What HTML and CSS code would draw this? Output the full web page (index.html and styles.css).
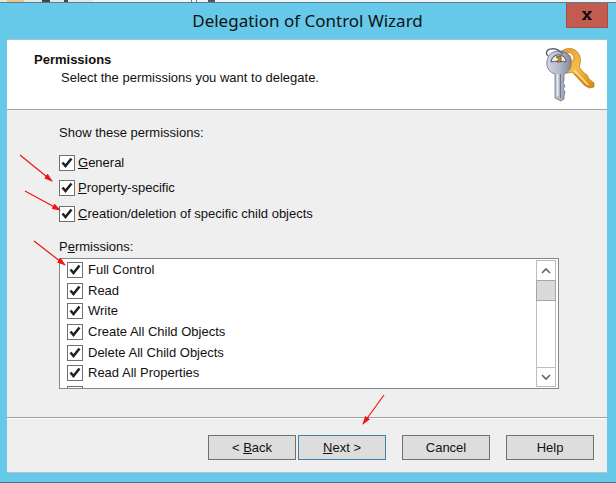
FILE: index.html
```html
<!DOCTYPE html>
<html lang="en">
<head>
<meta charset="UTF-8">
<meta name="viewport" content="width=device-width, initial-scale=1">
<title>Delegation of Control Wizard</title>
<link rel="stylesheet" href="styles.css">
</head>
<body>

<div class="behind">
	<svg width="300" height="2" viewBox="0 0 300 2">
		<path d="M0 0h93v2H0z" fill="#e6e6e6"/>
		<path d="M7 0h17v2H7z" fill="#e8c887"/>
		<path d="M42 1h8M64 1h4" stroke="#444" stroke-width="2"/>
		<path d="M191.500 0v2M196.500 0v2" stroke="#777"/>
		<path d="M208 1h7" stroke="#555" stroke-width="2"/>
	</svg>
</div>

<div class="window">
	<div class="titlebar">
		<h1>Delegation of Control Wizard</h1>
		<button type="button" class="close" aria-label="Close">
			<svg width="10" height="9" viewBox="0 0 10 9"><path d="M1.500 .5l7 8M8.500 .5l-7 8" stroke="#111" stroke-width="2.200"/><path d="M0 .5h4M6 .5h4M0 8.500h4M6 8.500h4" stroke="#111"/></svg>
		</button>
	</div>

	<form class="client">
		<div class="header">
			<div>
				<h2>Permissions</h2>
				<p>Select the permissions you want to delegate.</p>
			</div>
			<svg class="keys" width="52" height="56" viewBox="0 0 52 56">
				<defs>
					<linearGradient id="silver" x1="0" x2="1">
						<stop offset="0" stop-color="#d5d9e4"/>
						<stop offset=".5" stop-color="#b4b9c9"/>
						<stop offset="1" stop-color="#858b9e"/>
					</linearGradient>
					<linearGradient id="gold" x1="0" x2="1" y2="1">
						<stop offset="0" stop-color="#e29a22"/>
						<stop offset=".5" stop-color="#f8bd45"/>
						<stop offset="1" stop-color="#d8870f"/>
					</linearGradient>
				</defs>
				<!-- gold key -->
				<path fill-rule="evenodd" d="M17 4c5-4 13-3 16 2 3 4 3 9 1 14l4 5 4 3 2 4 5 4v4l-5 1-5-3-12-13c-7 3-13-1-13-8zM21 6c4 1 6 5 5 9 3-1 4-5 1-8-2-2-4-2-6-1z" fill="url(#gold)" stroke="#b9782a" stroke-width=".8"/>
				<path d="M29 23l14 15" stroke="#ffe09a" stroke-width="1.500"/>
				<path d="M30 27l13 13" stroke="#b86f12" stroke-width=".8"/>
				<!-- silver key -->
				<path fill-rule="evenodd" d="M3 11c1-5 6-7 11-7 7 0 12 5 12 12 0 5-2 9-7 11v6l-1 3 2 3-2 3 2 3-1 4 0 3-3 2-6-3V27C3 25 0 18 3 11zM6 15c4-4 12-5 15-1-1-4-4-6-8-6-4 0-7 3-7 7z" fill="url(#silver)" stroke="#697083" stroke-width=".8"/>
				<path d="M6 15c1-5 4-7 8-7s7 3 7 7c-4-1-11-1-15 0z" fill="#f3f1ec" stroke="#50586c"/>
				<path d="M11 10l5-1v6h-4l2-3z" fill="#d58d25" stroke="#57401e" stroke-width=".7"/>
				<path d="M12.500 27v22" stroke="#eef0f6" stroke-width="1.500"/>
				<path d="M15.500 27v24" stroke="#72798c"/>
				<path d="M3 9C0 6 2 2 6 2c5-1 9 2 12 5" fill="none" stroke="#5e6678" stroke-width="1.500"/>
			</svg>
		</div>

		<div class="content">
			<fieldset class="show">
				<legend>Show these permissions:</legend>
				<div class="filters">
					<label><input type="checkbox" checked><span><u>G</u>eneral</span></label>
					<label><input type="checkbox" checked><span><u>P</u>roperty-specific</span></label>
					<label><input type="checkbox" checked><span><u>C</u>reation/deletion of specific child objects</span></label>
				</div>
			</fieldset>

			<p class="caption" id="permLabel">P<u>e</u>rmissions:</p>
			<div class="listbox" role="group" aria-labelledby="permLabel">
				<div class="items">
					<label><input type="checkbox" checked>Full Control</label>
					<label><input type="checkbox" checked>Read</label>
					<label><input type="checkbox" checked>Write</label>
					<label><input type="checkbox" checked>Create All Child Objects</label>
					<label><input type="checkbox" checked>Delete All Child Objects</label>
					<label><input type="checkbox" checked>Read All Properties</label>
					<label><input type="checkbox" checked aria-label="Write All Properties"></label>
				</div>
				<div class="scrollbar">
					<button type="button" aria-label="Scroll up">
						<svg width="10" height="7" viewBox="0 0 10 7"><path d="M1 6l4-4 4 4" fill="none" stroke="#666" stroke-width="1.600"/></svg>
					</button>
					<div class="thumb"></div>
					<button type="button" class="down" aria-label="Scroll down">
						<svg width="10" height="7" viewBox="0 0 10 7"><path d="M1 1l4 4 4-4" fill="none" stroke="#666" stroke-width="1.600"/></svg>
					</button>
				</div>
			</div>
		</div>

		<div class="footer">
			<div class="pair">
				<button type="button" class="btn">&lt; <u>B</u>ack</button>
				<button type="button" class="btn default"><u>N</u>ext &gt;</button>
			</div>
			<button type="button" class="btn">Cancel</button>
			<button type="button" class="btn">Help</button>
		</div>
	</form>
</div>

<!-- red pointer arrows -->
<svg class="arrows" width="616" height="483" viewBox="0 0 616 483">
	<defs>
		<marker id="head" markerWidth="9" markerHeight="6" refX="8" refY="3" orient="auto" markerUnits="userSpaceOnUse">
			<path d="M0 0l9 3-9 3z" fill="#f01414"/>
		</marker>
	</defs>
	<g stroke="#f01414" stroke-width="1.200">
		<path d="M20 155L52 181" marker-end="url(#head)"/>
		<path d="M25 191L60 210" marker-end="url(#head)"/>
		<path d="M34 241L65 265" marker-end="url(#head)"/>
		<path d="M384 395L363 424" marker-end="url(#head)"/>
	</g>
</svg>

</body>
</html>
```

FILE: styles.css
```css
* {
	box-sizing: border-box;
}

body {
	margin: 0;
	min-height: 100vh;
	display: flex;
	flex-direction: column;
	background: #fff;
	color: #111;
	font-family: "Liberation Sans", Arial, sans-serif;
	font-size: 13px;
	line-height: 16px;
}

h1, h2, p {
	margin: 0;
}

button {
	font: inherit;
	color: inherit;
	padding: 0;
}

svg {
	display: block;
}

.behind {
	height: 2px;
	background: #f4f4f4;
}

.window {
	flex: 1;
	display: flex;
	flex-direction: column;
	padding: 0 9px 9px 7px;
	background: #66c9ea;
	border-top: 1px solid #4e8495;
	border-bottom: 1px solid #3d7486;
}

/* title bar */
.titlebar {
	display: grid;
	grid-template-columns: 42px 1fr 42px;
	height: 36px;
	margin-right: -1px;
}

.titlebar h1 {
	grid-column: 2;
	text-align: center;
	font-family: "Noto Sans", "Open Sans", sans-serif;
	font-size: 17px;
	font-weight: normal;
	line-height: 36px;
}

.close {
	height: 25px;
	display: flex;
	align-items: center;
	justify-content: center;
	background: #c45b51;
	border: 1px solid #a1504c;
	border-top: 0;
}

.client {
	flex: 1;
	display: flex;
	flex-direction: column;
	background: #efefef;
	border-bottom: 1px solid #b3c5cc;
}

.header {
	display: flex;
	justify-content: space-between;
	height: 71px;
	padding: 11px 10px 0 27px;
	background: #fff;
	border-top: 1px solid #a0c4d2;
	border-bottom: 1px solid #a5a5a5;
}

.header h2 {
	font-size: 13px;
	line-height: 18px;
}

.header p {
	padding-left: 27px;
	line-height: 18px;
}

.keys {
	margin-top: -4px;
}

/* check boxes */
input[type="checkbox"] {
	appearance: none;
	flex: none;
	width: 16px;
	height: 16px;
	margin: 0;
	border: 1px solid #707070;
	background: #fff;
}

input[type="checkbox"]:checked {
	background: #fff url('data:image/svg+xml,<svg xmlns="http://www.w3.org/2000/svg" viewBox="0 0 14 14"><path d="M2.500 6.500l3 3.500 6-7.500" fill="none" stroke="%23222" stroke-width="2.600"/></svg>') center / 14px 14px;
}

label {
	display: flex;
	align-items: center;
	gap: 3px;
}

.content {
	flex: 1;
	padding: 15px 48px 0 52px;
}

.show {
	margin: 0;
	padding: 0;
	border: 0;
}

legend {
	padding: 0;
}

.filters {
	display: grid;
	grid-template-rows: repeat(3, 1fr);
	height: 77px;
	margin-top: 9px;
}

.caption {
	margin-top: 12px;
}

.listbox {
	display: flex;
	height: 131px;
	margin-top: 3px;
	padding: 1px 2px 1px 7px;
	background: #fff;
	border: 1px solid #828790;
	overflow: hidden;
}

.items {
	flex: 1;
	display: grid;
	grid-template-rows: repeat(7, 1fr);
	height: 144px;
}

.items label {
	gap: 5px;
}

.scrollbar {
	display: flex;
	flex-direction: column;
	width: 20px;
	border: 1px solid #bdbdbd;
}

.scrollbar button {
	display: flex;
	align-items: center;
	justify-content: center;
	height: 19px;
	background: #fff;
	border: 0;
}

.thumb {
	height: 21px;
	margin: 0 -1px;
	background: #dadada;
	border: 1px solid #a6a6a6;
}

.scrollbar .down {
	margin-top: auto;
	border-top: 1px solid #bdbdbd;
}

/* wizard buttons */
.footer {
	display: flex;
	justify-content: flex-end;
	gap: 16px;
	padding: 17px 13px 12px;
	border-top: 1px solid #a0a0a0;
	box-shadow: inset 0 1px #fff;
}

.pair {
	display: flex;
	gap: 2px;
}

.btn {
	width: 88px;
	height: 25px;
	background: #dddddd;
	border: 1px solid #707070;
}

.btn.default {
	border-color: #3c7fb1;
}

.arrows {
	position: absolute;
	top: 0;
	left: 0;
	pointer-events: none;
}
```
